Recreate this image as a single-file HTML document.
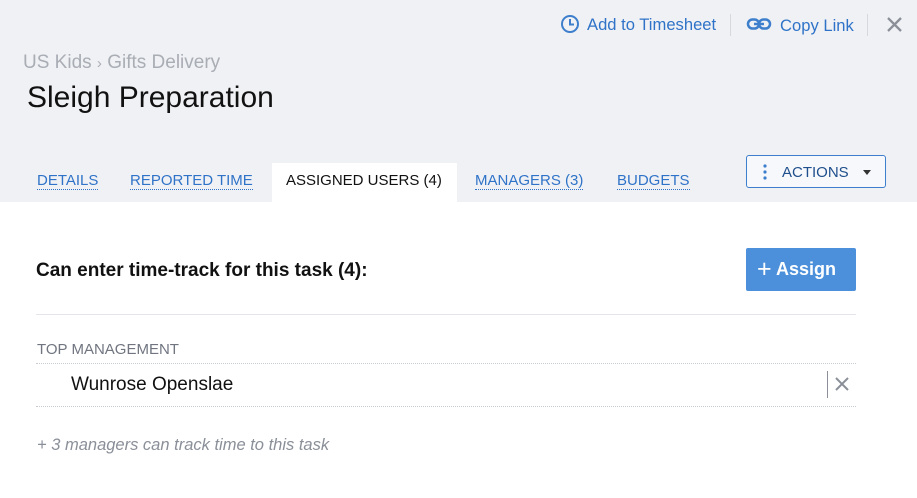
<!DOCTYPE html>
<html><head><style>
*{margin:0;padding:0;box-sizing:border-box}
body{width:917px;height:498px;overflow:hidden;background:#fff;font-family:"Liberation Sans",sans-serif;position:relative}
.hdr{position:absolute;left:0;top:0;width:917px;height:202px;background:#f0f1f5}
.a{position:absolute;white-space:nowrap}
.tab{position:absolute;top:172px;font-size:15px;color:#2f73c8;border-bottom:1px dotted #2f73c8;line-height:17px}
.sep{position:absolute;width:1px;background:#d6d8de}
</style></head><body>
<div class="hdr"></div>
<svg class="a" style="left:560px;top:14px" width="20" height="20" viewBox="0 0 20 20"><circle cx="10" cy="10" r="8" fill="none" stroke="#3d7fcc" stroke-width="2"/><path d="M10 5v5.5h4" fill="none" stroke="#3d7fcc" stroke-width="2"/></svg>
<div class="a" style="left:587px;top:15px;font-size:16.6px;color:#2f73c8">Add to Timesheet</div>
<div class="sep" style="left:730px;top:14px;height:22px"></div>
<svg class="a" style="left:746px;top:15px" width="26" height="18" viewBox="0 0 26 18"><rect x="2" y="4.5" width="11" height="9" rx="4.5" fill="none" stroke="#3d7fcc" stroke-width="2.5"/><rect x="13" y="4.5" width="11" height="9" rx="4.5" fill="none" stroke="#3d7fcc" stroke-width="2.5"/><path d="M8 9h10" stroke="#3d7fcc" stroke-width="2.5"/></svg>
<div class="a" style="left:780px;top:16px;font-size:16.6px;color:#2f73c8">Copy Link</div>
<div class="sep" style="left:867px;top:14px;height:22px"></div>
<svg class="a" style="left:886px;top:16px" width="17" height="17" viewBox="0 0 17 17"><path d="M2 2L15 15M15 2L2 15" stroke="#8a8f98" stroke-width="2.3"/></svg>
<div class="a" style="left:23px;top:52px;font-size:19px;color:#a9adb4">US Kids <span style="font-size:15px">›</span> Gifts Delivery</div>
<div class="a" style="left:27px;top:81px;font-size:30px;color:#111">Sleigh Preparation</div>
<div class="a" style="left:272px;top:163px;width:185px;height:39px;background:#fff"></div>
<div class="tab" style="left:37px">DETAILS</div>
<div class="tab" style="left:130px">REPORTED TIME</div>
<div class="tab" style="left:286px;color:#111;border:none">ASSIGNED USERS (4)</div>
<div class="tab" style="left:475px">MANAGERS (3)</div>
<div class="tab" style="left:617px">BUDGETS</div>
<div class="a" style="left:746px;top:155px;width:140px;height:33px;border:1px solid #3d7fcc;border-radius:3px;background:#f6f8fc"></div>
<svg class="a" style="left:762px;top:163px" width="6" height="18"><circle cx="3" cy="3" r="1.6" fill="#3d7fcc"/><circle cx="3" cy="9" r="1.6" fill="#3d7fcc"/><circle cx="3" cy="15" r="1.6" fill="#3d7fcc"/></svg>
<div class="a" style="left:782px;top:164px;font-size:15px;color:#1f4f8c">ACTIONS</div>
<svg class="a" style="left:863px;top:170px" width="8" height="5"><path d="M0 0h8L4 5z" fill="#333"/></svg>
<div class="a" style="left:36px;top:260px;font-size:19px;font-weight:bold;color:#111">Can enter time-track for this task (4):</div>
<div class="a" style="left:746px;top:248px;width:110px;height:43px;background:#4c90db;border-radius:2px;color:#fff;font-size:18px;font-weight:bold;line-height:43px;padding-left:11px"><span style="font-size:25px;font-weight:normal;vertical-align:-2px">+</span> Assign</div>
<div class="a" style="left:36px;top:314px;width:820px;height:1px;background:#e3e5ea"></div>
<div class="a" style="left:37px;top:341px;font-size:15px;color:#707580">TOP MANAGEMENT</div>
<div class="a" style="left:36px;top:363px;width:820px;border-top:1px dotted #c8cbd0"></div>
<div class="a" style="left:71px;top:374px;font-size:19px;color:#111">Wunrose Openslae</div>
<div class="a" style="left:827px;top:371px;width:1px;height:27px;background:#8a8f98"></div>
<svg class="a" style="left:835px;top:377px" width="14" height="14"><path d="M1 1L13 13M13 1L1 13" stroke="#8a8f98" stroke-width="2"/></svg>
<div class="a" style="left:36px;top:406px;width:820px;border-top:1px dotted #c8cbd0"></div>
<div class="a" style="left:37px;top:436px;font-size:16.5px;font-style:italic;color:#8a8f98">+ 3 managers can track time to this task</div>
</body></html>
